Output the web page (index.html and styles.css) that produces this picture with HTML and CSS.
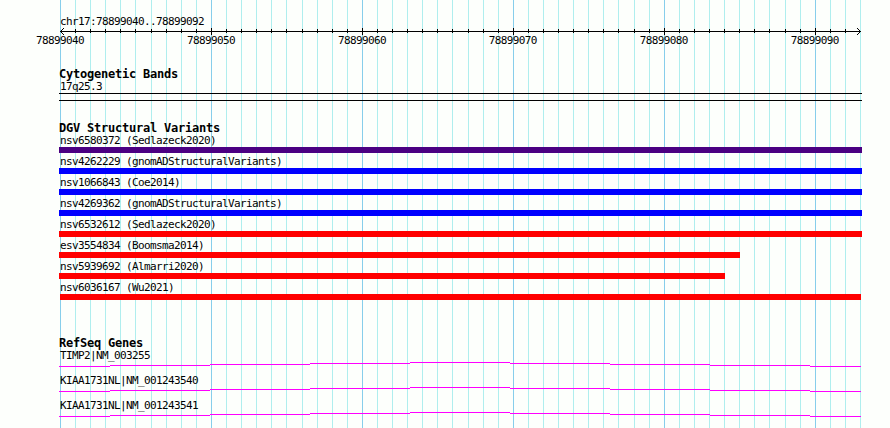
FILE: index.html
```html
<!DOCTYPE html>
<html lang="en">

<head>
    <meta charset="UTF-8">
    <title>chr17:78899040..78899092</title>
    <link rel="stylesheet" href="styles.css">
</head>

<body>

    <div class="browser">
        <!-- grid lines behind the tracks -->
        <svg class="grid" width="890" height="428">
            <path id="gridMinor" class="grid-minor" />
            <path id="gridMajor" class="grid-major" />
        </svg>

        <div class="ruler">
            <div class="label">chr17:78899040..78899092</div>
            <svg class="axis" width="890" height="7">
                <path d="M60 3h801v1h-801z" />
                <path d="M61 2h1v1h-1zM62 1h1v1h-1zM63 0h1v1h-1zM61 4h1v1h-1zM62 5h1v1h-1zM63 6h1v1h-1z" />
                <path d="M859 2h1v1h-1zM858 1h1v1h-1zM857 0h1v1h-1zM859 4h1v1h-1zM858 5h1v1h-1zM857 6h1v1h-1z" />
                <path id="ticks" />
            </svg>
            <div class="scale">
                <span>78899040</span>
                <span>78899050</span>
                <span>78899060</span>
                <span>78899070</span>
                <span>78899080</span>
                <span>78899090</span>
            </div>
        </div>

        <div class="track cytoband">
            <div class="title">Cytogenetic Bands</div>
            <div class="label">17q25.3</div>
            <div class="band"></div>
        </div>

        <div class="track variants">
            <div class="title">DGV Structural Variants</div>
            <div class="label">nsv6580372 (Sedlazeck2020)</div>
            <div class="bar complex"></div>
            <div class="label">nsv4262229 (gnomADStructuralVariants)</div>
            <div class="bar gain"></div>
            <div class="label">nsv1066843 (Coe2014)</div>
            <div class="bar gain"></div>
            <div class="label">nsv4269362 (gnomADStructuralVariants)</div>
            <div class="bar gain"></div>
            <div class="label">nsv6532612 (Sedlazeck2020)</div>
            <div class="bar loss"></div>
            <div class="label">esv3554834 (Boomsma2014)</div>
            <div class="bar loss" style="width: 681px"></div>
            <div class="label">nsv5939692 (Almarri2020)</div>
            <div class="bar loss" style="width: 666px"></div>
            <div class="label">nsv6036167 (Wu2021)</div>
            <div class="bar loss inside"></div>
        </div>

        <div class="track genes">
            <div class="title">RefSeq Genes</div>
            <div class="label">TIMP2|NM_003255</div>
            <svg class="intron" width="890" height="5">
                <path id="intron" d="M59 4.5H110M110 3.5H210M210 2.5H310M310 1.5H410M410 .5H510M510 1.5H610M610 2.5H710M710 3.5H810M810 4.5H861" />
            </svg>
            <div class="label">KIAA1731NL|NM_001243540</div>
            <svg class="intron" width="890" height="5"><use href="#intron" /></svg>
            <div class="label">KIAA1731NL|NM_001243541</div>
            <svg class="intron" width="890" height="5"><use href="#intron" /></svg>
        </div>
    </div>

    <script type="text/javascript">
        var left = 60;
        var width = 800;
        var bases = 53;
        var minor = '', major = '', ticks = '';

        // one line per base, a darker one every 10
        for (var i = 0; i <= bases; i++) {
            var x = Math.round(left + i * width / bases);
            var line = 'M' + x + ' 0h1v428h-1z';
            if (i % 10 == 0) {
                major += line;
            } else {
                minor += line;
            }
            if (i > 0 && i < bases) {
                ticks += i % 10 == 0 ? 'M' + x + ' 0h1v7h-1z' : 'M' + x + ' 1h1v4h-1z';
            }
        }

        document.getElementById('gridMinor').setAttribute('d', minor);
        document.getElementById('gridMajor').setAttribute('d', major);
        document.getElementById('ticks').setAttribute('d', ticks);
    </script>
</body>

</html>
```
FILE: styles.css
```css
body {
    margin: 0;
    background: #fdfffc;
    color: #000;
    font-family: "DejaVu Sans Mono", "Liberation Mono", monospace;
    font-size: 11px;
}

svg {
    display: block;
    shape-rendering: crispEdges;
}

.browser {
    position: relative;
    box-sizing: border-box;
    width: 890px;
    height: 428px;
    padding-top: 13px;
    overflow: hidden;
}

.grid {
    position: absolute;
    top: 0;
    left: 0;
    z-index: -1;
}

.grid-minor {
    fill: #afeeee;
}

.grid-major {
    fill: #87ceeb;
}

.label,
.title,
.scale {
    height: 15px;
    line-height: 17px;
    letter-spacing: -0.62px;
    white-space: pre;
}

.label {
    padding-left: 60px;
}

.title {
    height: 12px;
    padding-left: 59px;
    font-size: 12px;
    font-weight: bold;
    letter-spacing: -0.22px;
}

.axis {
    margin-bottom: -3px;
}

.scale {
    display: flex;
    padding-left: 36px;
}

.scale span {
    flex: 0 0 150.94px;
}

.cytoband,
.variants {
    margin-top: 19px;
}

.band {
    box-sizing: border-box;
    width: 803px;
    height: 8px;
    margin-left: 59px;
    border-top: 1px solid #000;
    border-bottom: 1px solid #000;
}

.bar {
    width: 803px;
    height: 6px;
    margin-left: 59px;
}

.bar.inside {
    width: 801px;
    margin-left: 60px;
}

.complex {
    background: #4b0082;
}

.gain {
    background: #0000ff;
}

.loss {
    background: #ff0000;
}

.genes {
    margin-top: 35px;
}

.intron {
    margin-bottom: 5px;
    fill: none;
    stroke: #ff00ff;
}
```
